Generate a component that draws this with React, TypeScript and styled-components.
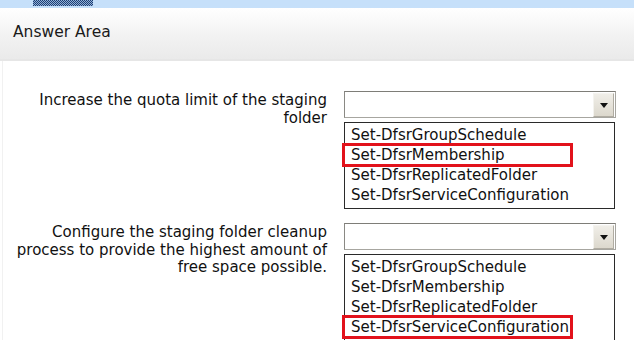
import styled, {createGlobalStyle} from "styled-components";

const GlobalStyle = createGlobalStyle`
  body {
    margin: 0;
    background: #ffffff;
    font-family: "DejaVu Sans", "Noto Sans", sans-serif;
    color: #111;
  }
`;

const Page = styled.div`
  width: 634px;
  height: 340px;
  overflow: hidden;
  background: #fff;
`;

const TopStrip = styled.div`
  height: 8px;
  background: #c6e0fa;
  display: flex;
  padding-left: 33px;
`;

const Dots = styled.div`
  width: 60px;
  height: 6px;
  background: conic-gradient(#1f3f73 25%, #8fb0d8 0 50%, #1f3f73 0 75%, #8fb0d8 0);
  background-size: 2px 2px;
`;

const Header = styled.div`
  height: 53px;
  box-sizing: border-box;
  padding: 0 0 3px 13px;
  display: flex;
  align-items: center;
  background: linear-gradient(#ffffff, #f2f2f2 55%, #eaeaea);
  border-bottom: 2px solid #e6e6e6;
  font-size: 15.5px;
  color: #1a1a1a;
`;

const Content = styled.div`
  padding-top: 30px;
  margin-left: 2px;
  border-left: 1px solid #f1f1f1;
  display: flex;
  flex-direction: column;
  gap: 14px;
`;

const Row = styled.div`
  display: flex;
  align-items: flex-start;
`;

const Label = styled.div`
  width: 324px;
  text-align: right;
  font-size: 15px;
  line-height: 17.5px;
  padding-top: 1px;
  white-space: nowrap;
`;

const Control = styled.div`
  margin-left: 17px;
  width: 271px;
  display: flex;
  flex-direction: column;
  gap: 4px;
`;

const Select = styled.div`
  height: 23px;
  border: 1px solid #a7a6a0;
  border-top-color: #7e7d78;
  border-left-color: #8a8984;
  display: flex;
  justify-content: flex-end;
  padding: 1px;
  width: 268px;
`;

const DropButton = styled.div`
  width: 19px;
  height: 22px;
  background: linear-gradient(#f0eee8, #dcd8cd);
  border: 1px solid #f4f3ef;
  border-right-color: #b0aca2;
  border-bottom-color: #b0aca2;
  display: flex;
  align-items: center;
  justify-content: center;
`;

const Arrow = styled.div`
  width: 0;
  height: 0;
  border-left: 4px solid transparent;
  border-right: 4px solid transparent;
  border-top: 5px solid #111;
`;

const List = styled.div`
  border: 1px solid #2a2a2a;
  padding: 2px 0 3px 6px;
  display: flex;
  flex-direction: column;
`;

const Item = styled.div<{ $marked?: boolean }>`
  position: relative;
  height: 20px;
  line-height: 20px;
  font-size: 15px;
  white-space: nowrap;

  &::after {
    content: "";
    display: ${p => (p.$marked ? "block" : "none")};
    position: absolute;
    left: -9px;
    top: -2px;
    width: 231px;
    height: 24px;
    box-sizing: border-box;
    border: 3px solid #e2121b;
  }
`;

const options = [
    "Set-DfsrGroupSchedule",
    "Set-DfsrMembership",
    "Set-DfsrReplicatedFolder",
    "Set-DfsrServiceConfiguration",
];

const questions = [
    {
        lines: ["Increase the quota limit of the staging", "folder"],
        answer: 1,
    },
    {
        lines: [
            "Configure the staging folder cleanup",
            "process to provide the highest amount of",
            "free space possible.",
        ],
        answer: 3,
    },
];

function App() {
    return (
        <Page>
            <GlobalStyle/>
            <TopStrip>
                <Dots/>
            </TopStrip>
            <Header>Answer Area</Header>
            <Content>
                {questions.map((q, qi) => (
                    <Row key={qi}>
                        <Label>
                            {q.lines.map((l, i) => (
                                <div key={i}>{l}</div>
                            ))}
                        </Label>
                        <Control>
                            <Select>
                                <DropButton>
                                    <Arrow/>
                                </DropButton>
                            </Select>
                            <List>
                                {options.map((o, i) => (
                                    <Item key={o} $marked={i === q.answer}>{o}</Item>
                                ))}
                            </List>
                        </Control>
                    </Row>
                ))}
            </Content>
        </Page>
    );
}

export default App;
